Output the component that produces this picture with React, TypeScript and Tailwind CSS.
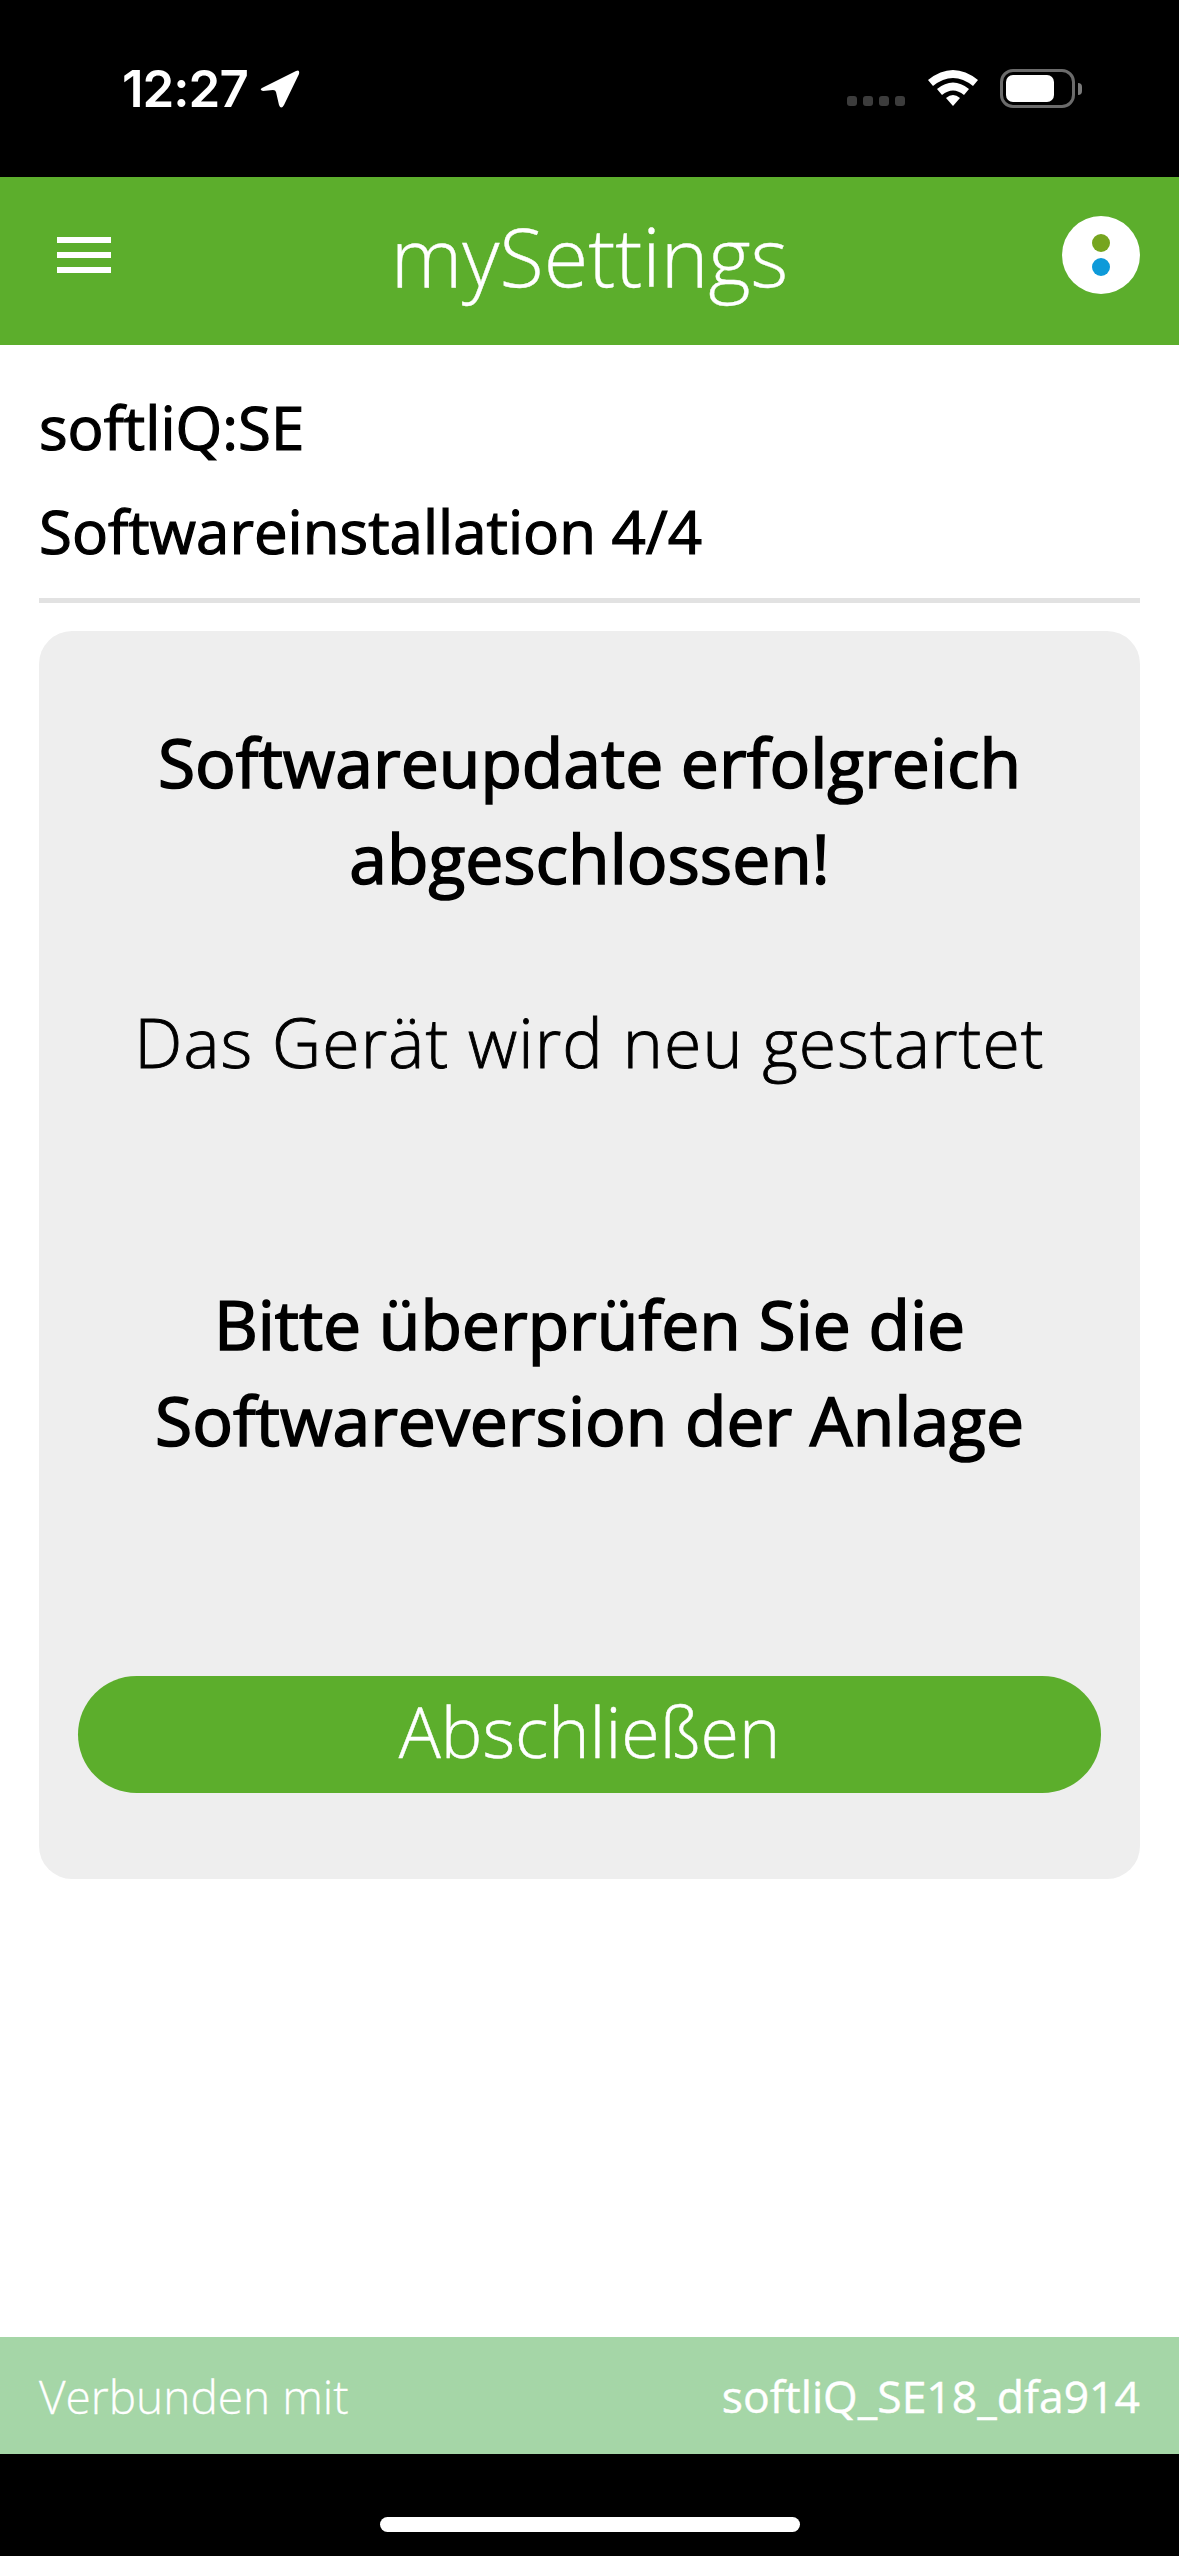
const openSans = { fontFamily: '"Open Sans", "Noto Sans", sans-serif' };

function StatusBar() {
  return (
    <div className="flex h-[177px] shrink-0 items-start justify-between bg-black pl-[122px] pr-[97px] pt-[69px]">
      <div className="flex items-center gap-[11px]">
        <span className="font-['Inter',sans-serif] text-[51px] font-semibold leading-[38px] tracking-[-1px] text-white">
          12:27
        </span>
        <svg width="42" height="40" viewBox="0 0 42 40">
          <path
            d="M3 19 L37 2 Q41 0 40 5 L25 36 Q22 41 20 36 L17 23 Q16.500 21 14 21 L4 22 Q0 21 3 19 Z"
            fill="#fff"
          />
        </svg>
      </div>
      <div className="flex items-start">
        <div className="mr-[23px] mt-[27px] flex gap-[6px]">
          {[0, 1, 2, 3].map((i) => (
            <div key={i} className="size-[10px] rounded-[3px] bg-[#3c3c3c]" />
          ))}
        </div>
        <svg width="50" height="37" viewBox="0 0 50 37" className="mr-[22px]">
          <path d="M0 11 Q25 -9 50 11 L45 17 Q25 1 5 17 Z" fill="#fff" />
          <path d="M9 20 Q25 7 41 20 L36 26 Q25 17 14 26 Z" fill="#fff" />
          <path d="M18 29 Q25 23 32 29 L25 37 Z" fill="#fff" />
        </svg>
        <div className="flex items-center">
          <div className="flex h-[39px] w-[75px] items-center rounded-[13px] border-[3px] border-[#6b6b6b] p-[3px]">
            <div className="h-[27px] w-[48px] rounded-[7px] bg-white" />
          </div>
          <div className="ml-[3px] h-[12px] w-[4px] rounded-r-full bg-[#7a7a7a]" />
        </div>
      </div>
    </div>
  );
}

function Header() {
  return (
    <header className="relative flex h-[168px] shrink-0 items-center justify-center bg-[#5cae2c] text-white">
      <div className="absolute left-[57px] top-[60px] flex w-[54px] flex-col gap-[9px]">
        <div className="h-[6px] bg-white" />
        <div className="h-[6px] bg-white" />
        <div className="h-[6px] bg-white" />
      </div>
      <h1 className="mb-[12px] text-[81px] font-light leading-none [-webkit-text-stroke:0.4px_white]" style={openSans}>
        mySettings
      </h1>
      <div className="absolute left-[1062px] top-[39px] flex size-[78px] flex-col items-center justify-center gap-[6px] rounded-full bg-white">
        <div className="size-[18px] rounded-full bg-[#76a51f]" />
        <div className="size-[18px] rounded-full bg-[#0e9ad9]" />
      </div>
    </header>
  );
}

export default function App() {
  return (
    <div className="flex h-[2556px] w-[1179px] flex-col overflow-hidden bg-white" style={openSans}>
      <StatusBar />
      <Header />
      <main className="flex-1 px-[39px]">
        <div className="border-b-[5px] border-[#e2e2e2] pb-[15px] pt-[30px] text-[60px] font-medium leading-[104px] text-black [-webkit-text-stroke:1.2px_black]">
          <div>softliQ:SE</div>
          <div>Softwareinstallation 4/4</div>
        </div>
        <div className="mt-[28px] flex h-[1248px] flex-col items-center rounded-[33px] bg-[#eeeeee] px-[39px] pt-[83px] text-center text-black">
          <p className="text-[67.800px] font-medium leading-[96px] [-webkit-text-stroke:1.600px_black]">
            Softwareupdate erfolgreich
            <br />
            abgeschlossen!
          </p>
          <p className="mt-[88px] text-[68px] font-light leading-[96px] tracking-[1.100px] [-webkit-text-stroke:0.9px_black]">
            Das Gerät wird neu gestartet
          </p>
          <p className="mt-[186px] text-[67.800px] font-medium leading-[96px] [-webkit-text-stroke:1.600px_black]">
            Bitte überprüfen Sie die
            <br />
            Softwareversion der Anlage
          </p>
          <button className="mt-[208px] h-[117px] w-full rounded-full bg-[#5cae2c] pb-[7px] text-[70px] font-light text-white [-webkit-text-stroke:0.5px_white]">
            Abschließen
          </button>
        </div>
      </main>
      <footer className="flex h-[117px] shrink-0 items-center justify-between bg-[#a5d6a7] px-[39px] pt-[2px] text-white">
        <span className="text-[46px] font-light [-webkit-text-stroke:0.3px_white]">Verbunden mit</span>
        <span className="text-[44.500px] font-medium [-webkit-text-stroke:0.4px_white]">softliQ_SE18_dfa914</span>
      </footer>
      <div className="flex h-[102px] shrink-0 justify-center bg-black pt-[63px]">
        <div className="h-[15px] w-[420px] rounded-full bg-white" />
      </div>
    </div>
  );
}
